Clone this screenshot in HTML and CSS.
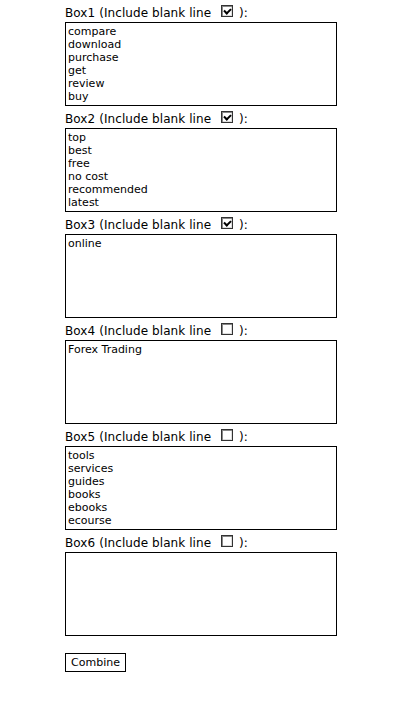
FILE: index.html
```html
<!DOCTYPE html>
<html>
<head>
<meta charset="utf-8">
<link rel="stylesheet" href="styles.css">
</head>
<body>
<form class="combiner">
  <div class="box">
    <label class="lbl">Box1 (Include blank line <input type="checkbox" class="chk" checked> ):</label>
    <textarea class="ta">compare
download
purchase
get
review
buy</textarea>
  </div>
  <div class="box">
    <label class="lbl">Box2 (Include blank line <input type="checkbox" class="chk" checked> ):</label>
    <textarea class="ta">top
best
free
no cost
recommended
latest</textarea>
  </div>
  <div class="box">
    <label class="lbl">Box3 (Include blank line <input type="checkbox" class="chk" checked> ):</label>
    <textarea class="ta">online</textarea>
  </div>
  <div class="box">
    <label class="lbl">Box4 (Include blank line <input type="checkbox" class="chk"> ):</label>
    <textarea class="ta">Forex Trading</textarea>
  </div>
  <div class="box">
    <label class="lbl">Box5 (Include blank line <input type="checkbox" class="chk"> ):</label>
    <textarea class="ta">tools
services
guides
books
ebooks
ecourse</textarea>
  </div>
  <div class="box">
    <label class="lbl">Box6 (Include blank line <input type="checkbox" class="chk"> ):</label>
    <textarea class="ta"></textarea>
  </div>
  <div class="actions">
    <button type="button" class="btn">Combine</button>
  </div>
</form>
</body>
</html>
```
FILE: styles.css
```css
html, body {
  margin: 0;
  padding: 0;
  background: #fff;
}
body {
  font-family: "DejaVu Sans", Verdana, sans-serif;
  color: #000;
}
.combiner {
  display: flex;
  flex-direction: column;
  padding: 4px 0 0 65px;
  width: 272px;
}
.box {
  display: flex;
  flex-direction: column;
}
.lbl {
  display: flex;
  align-items: center;
  height: 18px;
  font-size: 12px;
  letter-spacing: 0.08px;
  white-space: pre;
}
.chk {
  appearance: none;
  -webkit-appearance: none;
  width: 12px;
  height: 12px;
  margin: 0 2px 0 6px;
  border: 1px solid #333;
  background: #fff;
  box-shadow: inset 1px 1px 0 #888, inset -1px -1px 0 #ddd;
  position: relative;
  top: -2px;
}
.chk:checked::after {
  content: "";
  position: absolute;
  left: 3px;
  top: 1px;
  width: 3px;
  height: 5px;
  border: solid #000;
  border-width: 0 2px 2px 0;
  transform: rotate(45deg);
}
.ta {
  box-sizing: border-box;
  width: 272px;
  height: 84px;
  margin: 0 0 4px 0;
  padding: 2px 2px 1px;
  border: 1px solid #000;
  font-family: "DejaVu Sans", Verdana, sans-serif;
  font-size: 11px;
  line-height: 13px;
  resize: none;
  overflow: hidden;
  color: #000;
}
.actions {
  padding-top: 11px;
}
.btn {
  box-sizing: border-box;
  height: 19px;
  width: 61px;
  padding: 0;
  border: 1px solid #000;
  background: #fff;
  font-family: "DejaVu Sans", Verdana, sans-serif;
  font-size: 11px;
  color: #000;
}
```
